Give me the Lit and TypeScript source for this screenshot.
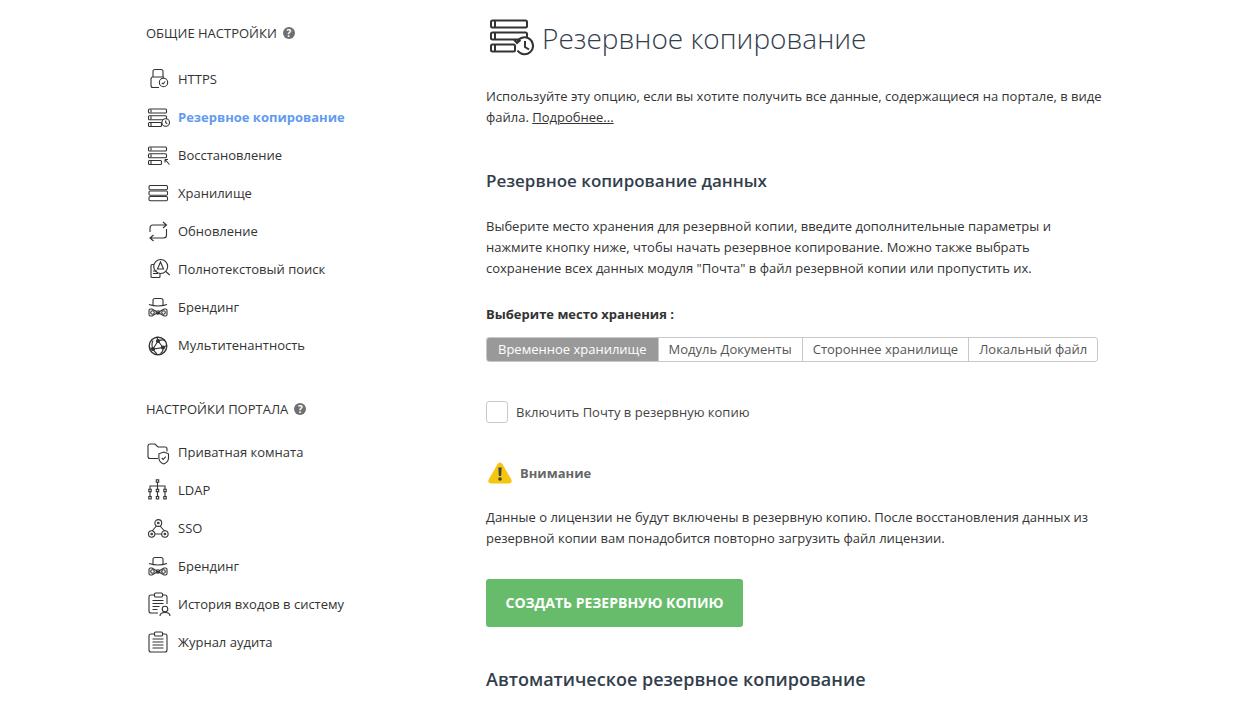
import { LitElement, html, css, svg } from "lit";
import { customElement } from "lit/decorators.js";

const rack = svg`<rect x="2.500" y="4" width="18" height="4" rx="1"/><rect x="2.500" y="10.800" width="18" height="4" rx="1"/><rect x="2.500" y="17.500" width="13" height="4" rx="1"/><path d="M5 4.500v3M5 11.300v3M5 18v3"/>`;
const brand = svg`<path d="M7 10V5.500q0-2 2-2h6q2 0 2 2V10"/><path d="M3 9.500q9 3 18 0"/><path d="M12 17.500L6 14H4.500Q3 14 3 15.500v4Q3 21 4.500 21H6zM12 17.500L18 14h1.500Q21 14 21 15.500v4Q21 21 19.500 21H18z"/><circle cx="12" cy="17.500" r="1.800"/><circle cx="6.500" cy="17.500" r="1.800"/><circle cx="17.500" cy="17.500" r="1.800"/>`;
const icons: Record<string, unknown> = {
  https: svg`<path d="M7 10V4.500a2 2 0 0 1 2-2h6a2 2 0 0 1 2 2V10"/><path d="M13 20.500H7a2 2 0 0 1-2-2V12a2 2 0 0 1 2-2h10a2 2 0 0 1 1 .5"/><circle cx="17.500" cy="15.500" r="4.200"/><path d="M15.800 15.800l1.300 1.200 2.100-2.500"/>`,
  backup: svg`${rack}<circle cx="19.700" cy="17.500" r="3.800" fill="#fff"/><path d="M19.700 15.500v2.300l1.600 1"/>`,
  restore: svg`${rack}<path d="M19 16.500h3M19 16.500v3M19 16.500l4.500 5"/>`,
  storage: svg`<rect x="3" y="4.500" width="18.500" height="4.300" rx="1.200"/><rect x="3" y="10" width="18.500" height="4.300" rx="1.200"/><rect x="3" y="15.500" width="18.500" height="4.300" rx="1.200"/>`,
  update: svg`<path d="M4 13V9a3 3 0 0 1 3-3h13M17 3l3.500 3-3.500 3"/><path d="M20.500 10v6a3 3 0 0 1-3 3H4M7.500 16L4 19l3.500 3"/>`,
  search: svg`<circle cx="14.700" cy="9.500" r="7"/><path d="M19.700 14.500l4 3.500"/><path d="M7.700 7.500H6a1 1 0 0 0-1 1v11a1 1 0 0 0 1 1h7a1 1 0 0 0 1-1v-3"/><path d="M7 14h4M7 16.500h5M11.500 12l3-7 3 7z"/>`,
  brand,
  multi: svg`<circle cx="12" cy="13" r="8.800" stroke-width="1.400"/><path d="M12 8l-5 8 10-1.500zM12 8l-1-4.500M7 16l-3-1M17 14.500l3.500-2M7 16q1.500 3 4 5M17 14.500q.5 4-2.500 6M12 8q5-2 7-.5M7 16q-2-4 0-8.500" /><circle cx="12" cy="8" r="1.500" fill="#333"/><circle cx="7" cy="16" r="1.500" fill="#333"/><circle cx="17" cy="14.500" r="1.500" fill="#333"/>`,
  folder: svg`<path d="M12 18.500H4a2 2 0 0 1-2-2V6a2 2 0 0 1 2-2h5l3 3h7a2 2 0 0 1 2 2v2.500"/><path d="M17.700 12l4.800 1.800v4.200q0 4-4.800 6q-4.800-2-4.800-6v-4.200z" /><path d="M15.800 18l1.500 1.500 2.400-2.800"/>`,
  ldap: svg`<path d="M11.500 4v15M4 11V8h15v3M4 14v4M19 14v4"/><rect x="10.300" y="1.800" width="2.400" height="2.400"/><rect x="2.800" y="11.300" width="2.400" height="2.400"/><rect x="10.300" y="11.300" width="2.400" height="2.400" fill="#fff"/><rect x="17.800" y="11.300" width="2.400" height="2.400"/><rect x="2.800" y="18.500" width="2.400" height="2.400"/><rect x="10.300" y="18.500" width="2.400" height="2.400"/><rect x="17.800" y="18.500" width="2.400" height="2.400"/>`,
  sso: svg`<circle cx="12.300" cy="7" r="3.400"/><path d="M2.500 18a3.200 3.200 0 1 0 6.400 0a3.200 3.200 0 1 0-6.400 0M15.700 18a3.200 3.200 0 1 0 6.400 0a3.200 3.200 0 1 0-6.400 0M10.500 10l-4.500 5M14 10l4.500 5M9 18h6.500"/><circle cx="12.300" cy="7" r=".8"/><circle cx="5.700" cy="18" r=".8"/><circle cx="18.900" cy="18" r=".8"/>`,
  history: svg`<path d="M9 3H5a2 2 0 0 0-2 2v14a2 2 0 0 0 2 2h7M16 3h3a2 2 0 0 1 2 2v7"/><rect x="8.500" y="1" width="8" height="4" rx="1"/><path d="M6.500 8.500h11M6.500 11.500h11M6.500 14.500h7M6.500 17.500h5"/><circle cx="19" cy="17" r="2.800"/><path d="M14 24q0-3.500 5-3.500t5 3.500"/>`,
  audit: svg`<path d="M8.500 4H5a2 2 0 0 0-2 2v14a2 2 0 0 0 2 2h14a2 2 0 0 0 2-2V6a2 2 0 0 0-2-2h-3"/><rect x="8.500" y="2" width="8" height="4" rx="1"/><path d="M6.500 9h11M6.500 12h11M6.500 15h11M6.500 18h11"/>`,
};

const general = [
  ["https", "HTTPS"], ["backup", "Резервное копирование", true], ["restore", "Восстановление"], ["storage", "Хранилище"],
  ["update", "Обновление"], ["search", "Полнотекстовый поиск"], ["brand", "Брендинг"], ["multi", "Мультитенантность"],
] as [string, string, boolean?][];
const portal = [
  ["folder", "Приватная комната"], ["ldap", "LDAP"], ["sso", "SSO"], ["brand", "Брендинг"],
  ["history", "История входов в систему"], ["audit", "Журнал аудита"],
] as [string, string, boolean?][];

@customElement("app-root")
export class AppRoot extends LitElement {
  static styles = css`
    :host { display: block; height: 708px; overflow: hidden; background: #fff; font-family: "Open Sans", sans-serif; font-size: 13px; color: #333; }
    .page { display: flex; padding-left: 146px; }
    .side { width: 340px; flex: none; padding-top: 24px; }
    .head { display: flex; align-items: center; gap: 6px; height: 18px; color: #333; line-height: 18px; }
    .help { width: 12px; height: 12px; border-radius: 50%; background: #6f6f6f; color: #fff; font-size: 10px; font-weight: 700; line-height: 12px; text-align: center; }
    .list { margin-top: 18px; display: flex; flex-direction: column; }
    .list + .head { margin-top: 36px; }
    .list + .head + .list { margin-top: 15px; }
    .item { height: 38px; display: flex; align-items: center; gap: 7px; color: #333; }
    .item svg { width: 25px; height: 25px; flex: none; fill: none; stroke: #333; stroke-width: 1.1; }
    .item.on { color: #5f9cef; font-weight: 700; }
    .main { width: 640px; flex: none; }
    .title { display: flex; align-items: center; gap: 8px; height: 36px; margin-top: 20px; margin-left: 4px; }
    .title svg { width: 44px; height: 38px; flex: none; fill: none; stroke: #333; stroke-width: 2; }
    h1 { margin: 0; font-size: 28px; font-weight: 300; color: #333e4d; line-height: 36px; white-space: nowrap; }
    p { margin: 0; line-height: 20.800px; color: #333; white-space: nowrap; }
    .intro { margin-top: 30px; }
    a { color: #333; text-decoration: underline; }
    h2 { margin: 0; font-size: 17px; font-weight: 600; color: #333e4d; line-height: 24px; }
    .h-data { margin-top: 41px; }
    .desc { margin-top: 23.600px; }
    .pick { margin-top: 25.400px; font-weight: 700; line-height: 20px; }
    .tabs { margin-top: 13px; display: flex; height: 25px; border: 1px solid #c8c8c8; border-radius: 3px; box-sizing: border-box; overflow: hidden; width: 612px; }
    .tab { padding: 0 10px; line-height: 22px; color: #555; border-left: 1px solid #c8c8c8; white-space: nowrap; }
    .tab:first-child { border-left: 0; padding: 0 11px; background: #999; color: #fff; line-height: 23px; }
    .check { margin-top: 39px; display: flex; align-items: center; gap: 8px; color: #444; height: 22px; }
    .box { width: 20px; height: 20px; border: 1px solid #c8c8c8; border-radius: 3px; }
    .warn { margin-top: 38px; margin-left: 2px; display: flex; align-items: center; gap: 8px; height: 24px; font-weight: 700; color: #666; }
    .warn svg { width: 24px; height: 22px; flex: none; }
    .lic { margin-top: 22px; }
    .btn { margin-top: 30px; width: 257px; height: 48px; box-sizing: border-box; border-radius: 3px; background: #66bc6a; color: #fff; font-size: 14px; font-weight: 700; display: flex; align-items: center; justify-content: center; }
    .h-auto { margin-top: 40px; font-size: 18px; }
  `;

  private list(items: [string, string, boolean?][]) {
    return html`<div class="list">${items.map(([i, t, on]) => html`
      <div class="item ${on ? "on" : ""}"><svg viewBox="0 0 25 25">${icons[i]}</svg><span>${t}</span></div>`)}</div>`;
  }

  render() {
    return html`<div class="page">
      <nav class="side">
        <div class="head">ОБЩИЕ НАСТРОЙКИ <span class="help">?</span></div>
        ${this.list(general)}
        <div class="head">НАСТРОЙКИ ПОРТАЛА <span class="help">?</span></div>
        ${this.list(portal)}
      </nav>
      <main class="main">
        <div class="title">
          <svg viewBox="0 0 44 38">
            <rect x="1" y="1.500" width="36" height="7" rx="1.500"/><rect x="1" y="13.500" width="36" height="7" rx="1.500"/><rect x="1" y="25.500" width="24" height="7" rx="1.500"/>
            <path d="M5 2v6M5 14v6M5 26v6"/>
            <path d="M27.200 22.500a8.500 8.500 0 1 1 .3 9" fill="#fff"/><path d="M24 20.500l3 3.500 3.500-3"/><path d="M35 22v6l4 2.500"/>
          </svg>
          <h1>Резервное копирование</h1>
        </div>
        <p class="intro">Используйте эту опцию, если вы хотите получить все данные, содержащиеся на портале, в виде<br>файла. <a>Подробнее...</a></p>
        <h2 class="h-data">Резервное копирование данных</h2>
        <p class="desc">Выберите место хранения для резервной копии, введите дополнительные параметры и<br>нажмите кнопку ниже, чтобы начать резервное копирование. Можно также выбрать<br>сохранение всех данных модуля "Почта" в файл резервной копии или пропустить их.</p>
        <div class="pick">Выберите место хранения :</div>
        <div class="tabs"><span class="tab">Временное хранилище</span><span class="tab">Модуль Документы</span><span class="tab">Стороннее хранилище</span><span class="tab">Локальный файл</span></div>
        <div class="check"><span class="box"></span>Включить Почту в резервную копию</div>
        <div class="warn">
          <svg viewBox="0 0 24 22"><path d="M12 .500q1.500 0 2.500 1.700l8.800 15.300q1.400 3.500-2.300 4H3q-3.700-.5-2.300-4L9.500 2.200q1-1.700 2.500-1.700z" fill="#f4c60f"/><path d="M10.300 5.500h3.400l-.6 8.500h-2.200z" fill="#444"/><circle cx="12" cy="17" r="1.800" fill="#444"/></svg>
          Внимание
        </div>
        <p class="lic">Данные о лицензии не будут включены в резервную копию. После восстановления данных из<br>резервной копии вам понадобится повторно загрузить файл лицензии.</p>
        <div class="btn">СОЗДАТЬ РЕЗЕРВНУЮ КОПИЮ</div>
        <h2 class="h-auto">Автоматическое резервное копирование</h2>
      </main>
    </div>`;
  }
}
